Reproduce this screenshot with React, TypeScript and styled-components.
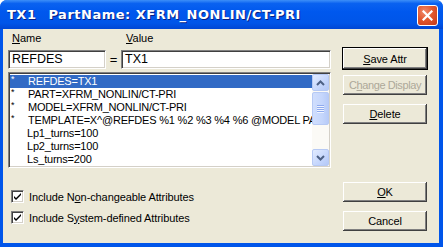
import styled, { createGlobalStyle } from 'styled-components'
import { FC, ReactNode } from 'react'

const GlobalStyle = createGlobalStyle`
    html, body {
        margin: 0;
        padding: 0;
        background: #ffffff;
    }
    body {
        font-family: 'Liberation Sans', Arial, sans-serif;
        font-size: 11px;
        color: #000;
    }
`;

const Window = styled.div`
    width: 443px;
    height: 247px;
    display: flex;
    flex-direction: column;
    overflow: hidden;
    background: #0055ea;
    border-radius: 7px 7px 0 0;
`;
const TitleBar = styled.div`
    height: 29px;
    flex: none;
    display: flex;
    align-items: center;
    padding: 0 5px 0 7px;
    background: linear-gradient(#3d8ff8 0%, #0a62f0 12%, #0058ee 40%, #0055e8 80%, #0046d4 100%);
    color: white;
    font-family: 'DejaVu Sans', 'Liberation Sans', sans-serif;
    font-weight: bold;
    font-size: 13px;
    letter-spacing: 0.5px;
    text-shadow: 1px 1px 0 #0a1e82;
    white-space: pre;
`;
const TitleText = styled.span<{ $gap?: number }>`
    margin-left: ${p => p.$gap ?? 0}px;
`;
const CloseButton = styled.div`
    width: 21px;
    height: 21px;
    margin-left: auto;
    box-sizing: border-box;
    border: 1px solid #ffffff;
    border-radius: 3px;
    background: radial-gradient(circle at 35% 30%, #f08a6c 0%, #e2582e 45%, #c4391b 100%);
    display: flex;
    align-items: center;
    justify-content: center;
    margin-top: 1px;
`;
const Body = styled.div`
    flex: 1;
    display: flex;
    margin: 0 4px 4px 3px;
    padding: 2px 0 0 5px;
    background: #ece9d8;
`;
const LeftColumn = styled.div`
    width: 323px;
    display: flex;
    flex-direction: column;
`;
const RightColumn = styled.div`
    width: 86px;
    margin-left: 11px;
    display: flex;
    flex-direction: column;
`;
const LabelRow = styled.div`
    height: 14px;
    display: flex;
    align-items: center;
    margin-bottom: 5px;
`;
const Label = styled.span<{ $width?: number }>`
    width: ${p => p.$width ?? 0}px;
    padding-left: 4px;
    flex: none;
`;
const InputRow = styled.div`
    display: flex;
    align-items: center;
`;
const TextBox = styled.div<{ $width: number }>`
    width: ${p => p.$width}px;
    height: 19px;
    box-sizing: border-box;
    background: #fff;
    border: 1px solid;
    border-color: #808080 #ffffff #ffffff #808080;
    box-shadow: inset 1px 1px 0 #404040, inset -1px -1px 0 #d4d0c8;
    padding: 0 3px;
    font-size: 12.5px;
    line-height: 17px;
    white-space: nowrap;
    overflow: hidden;
`;
const Equals = styled.span`
    width: 15px;
    text-align: center;
    font-size: 13px;
`;
const ListBox = styled.div`
    margin-top: 3px;
    height: 96px;
    box-sizing: border-box;
    background: #fff;
    border: 1px solid;
    border-color: #808080 #ffffff #ffffff #808080;
    box-shadow: inset 1px 1px 0 #404040, inset -1px -1px 0 #d4d0c8;
    padding: 2px 1px 1px 1px;
    display: flex;
`;
const Items = styled.div`
    flex: 1;
    overflow: hidden;
`;
const Item = styled.div<{ $selected?: boolean }>`
    height: 13px;
    line-height: 13px;
    display: flex;
    white-space: nowrap;
    overflow: hidden;
    background: ${p => (p.$selected ? '#316ac5' : 'transparent')};
    color: ${p => (p.$selected ? '#fff' : '#000')};
    font-size: 11px;
    letter-spacing: -0.2px;
`;
const Mark = styled.span`
    width: 17px;
    padding-left: 1px;
    font-size: 9px;
    line-height: 9px;
    flex: none;
`;
const Scrollbar = styled.div`
    width: 17px;
    display: flex;
    flex-direction: column;
    background: #fbfaf6;
    margin-top: -1px;
`;
const ScrollButton = styled.div`
    width: 17px;
    height: 17px;
    box-sizing: border-box;
    border: 1px solid #b6c9f4;
    border-radius: 2px;
    background: linear-gradient(135deg, #e2ebfe 0%, #c5d6fc 60%, #b4c8f6 100%);
    display: flex;
    align-items: center;
    justify-content: center;
`;
const Thumb = styled(ScrollButton)`
    height: 33px;
    margin-top: 1px;
    flex-direction: column;
    gap: 1px;
    background: linear-gradient(90deg, #d0defd 0%, #c5d6fc 60%, #b7cbf8 100%);
`;
const Grip = styled.div`
    width: 7px;
    height: 1px;
    background: #8faaee;
    box-shadow: 0 1px 0 #eef3ff;
`;
const Track = styled.div`
    flex: 1;
`;
const CheckRow = styled.label`
    display: flex;
    align-items: center;
    height: 13px;
    padding-left: 3px;
    margin-top: 8px;
    letter-spacing: -0.1px;
    &:first-of-type {
        margin-top: 22px;
    }
`;
const CheckBox = styled.span`
    width: 13px;
    height: 13px;
    box-sizing: border-box;
    background: #fff;
    border: 1px solid;
    border-color: #808080 #ffffff #ffffff #808080;
    box-shadow: inset 1px 1px 0 #404040, inset -1px -1px 0 #d4d0c8;
    display: flex;
    align-items: center;
    justify-content: center;
    margin-right: 5px;
`;
const Button = styled.div<{ $default?: boolean; $disabled?: boolean; $top: number }>`
    height: ${p => (p.$default ? 23 : 22)}px;
    margin-top: ${p => p.$top}px;
    box-sizing: border-box;
    display: flex;
    align-items: center;
    justify-content: center;
    white-space: nowrap;
    background: #ece9d8;
    border: 1px solid ${p => (p.$default ? '#000' : 'transparent')};
    box-shadow: inset -1px -1px 0 #404040, inset 1px 1px 0 #ffffff, inset -2px -2px 0 #808080, inset 2px 2px 0 #ece9d8;
    color: ${p => (p.$disabled ? '#aca899' : '#000')};
    font-size: 11px;
    letter-spacing: ${p => (p.$disabled ? -0.4 : -0.1)}px;
`;
const Underline = styled.span`
    text-decoration: underline;
    text-underline-offset: 1px;
`;

const U: FC<{ children: ReactNode }> = ({ children }) => <Underline>{children}</Underline>;

const items: { mark: boolean; text: string }[] = [
    { mark: true, text: 'REFDES=TX1' },
    { mark: true, text: 'PART=XFRM_NONLIN/CT-PRI' },
    { mark: true, text: 'MODEL=XFRM_NONLIN/CT-PRI' },
    { mark: true, text: 'TEMPLATE=X^@REFDES %1 %2 %3 %4 %6 @MODEL PARAMS:' },
    { mark: false, text: 'Lp1_turns=100' },
    { mark: false, text: 'Lp2_turns=100' },
    { mark: false, text: 'Ls_turns=200' },
];

const Check = () => (
    <svg width="9" height="9" viewBox="0 0 9 9">
        <path d="M1 4 L3 6 L8 1 L8 3 L3 8 L1 6 Z" fill="#000" />
    </svg>
);

const App: FC = () => {
    return (
        <Window>
            <GlobalStyle />
            <TitleBar>
                <TitleText>TX1</TitleText>
                <TitleText $gap={12}>PartName: XFRM_NONLIN/CT-PRI</TitleText>
                <CloseButton>
                    <svg width="11" height="11" viewBox="0 0 11 11">
                        <path d="M1.5 1.5 L9.5 9.5 M9.5 1.5 L1.5 9.5" stroke="#fff" strokeWidth="2.2" strokeLinecap="square" />
                    </svg>
                </CloseButton>
            </TitleBar>
            <Body>
                <LeftColumn>
                    <LabelRow>
                        <Label $width={110}><U>N</U>ame</Label>
                        <Label><U>V</U>alue</Label>
                    </LabelRow>
                    <InputRow>
                        <TextBox $width={98}>REFDES</TextBox>
                        <Equals>=</Equals>
                        <TextBox $width={210}>TX1</TextBox>
                    </InputRow>
                    <ListBox>
                        <Items>
                            {items.map((it, i) => (
                                <Item key={i} $selected={i === 0}>
                                    <Mark>{it.mark ? '*' : ''}</Mark>
                                    <span style={it.mark ? undefined : { marginLeft: -1 }}>{it.text}</span>
                                </Item>
                            ))}
                        </Items>
                        <Scrollbar>
                            <ScrollButton>
                                <svg width="9" height="6" viewBox="0 0 9 6">
                                    <path d="M1 5 L4.5 1.5 L8 5" stroke="#4d6185" strokeWidth="2" fill="none" />
                                </svg>
                            </ScrollButton>
                            <Thumb>
                                <Grip />
                                <Grip />
                                <Grip />
                                <Grip />
                            </Thumb>
                            <Track />
                            <ScrollButton>
                                <svg width="9" height="6" viewBox="0 0 9 6">
                                    <path d="M1 1 L4.5 4.5 L8 1" stroke="#4d6185" strokeWidth="2" fill="none" />
                                </svg>
                            </ScrollButton>
                        </Scrollbar>
                    </ListBox>
                    <CheckRow>
                        <CheckBox><Check /></CheckBox>
                        Include N<U>o</U>n-changeable Attributes
                    </CheckRow>
                    <CheckRow>
                        <CheckBox><Check /></CheckBox>
                        Include S<U>y</U>stem-defined Attributes
                    </CheckRow>
                </LeftColumn>
                <RightColumn>
                    <Button $default $top={16}><U>S</U>ave Attr</Button>
                    <Button $disabled $top={4}>C<U>h</U>ange Display</Button>
                    <Button $top={7}><U>D</U>elete</Button>
                    <Button $top={56}><U>O</U>K</Button>
                    <Button $top={7}>Cancel</Button>
                </RightColumn>
            </Body>
        </Window>
    )
}
export default App
